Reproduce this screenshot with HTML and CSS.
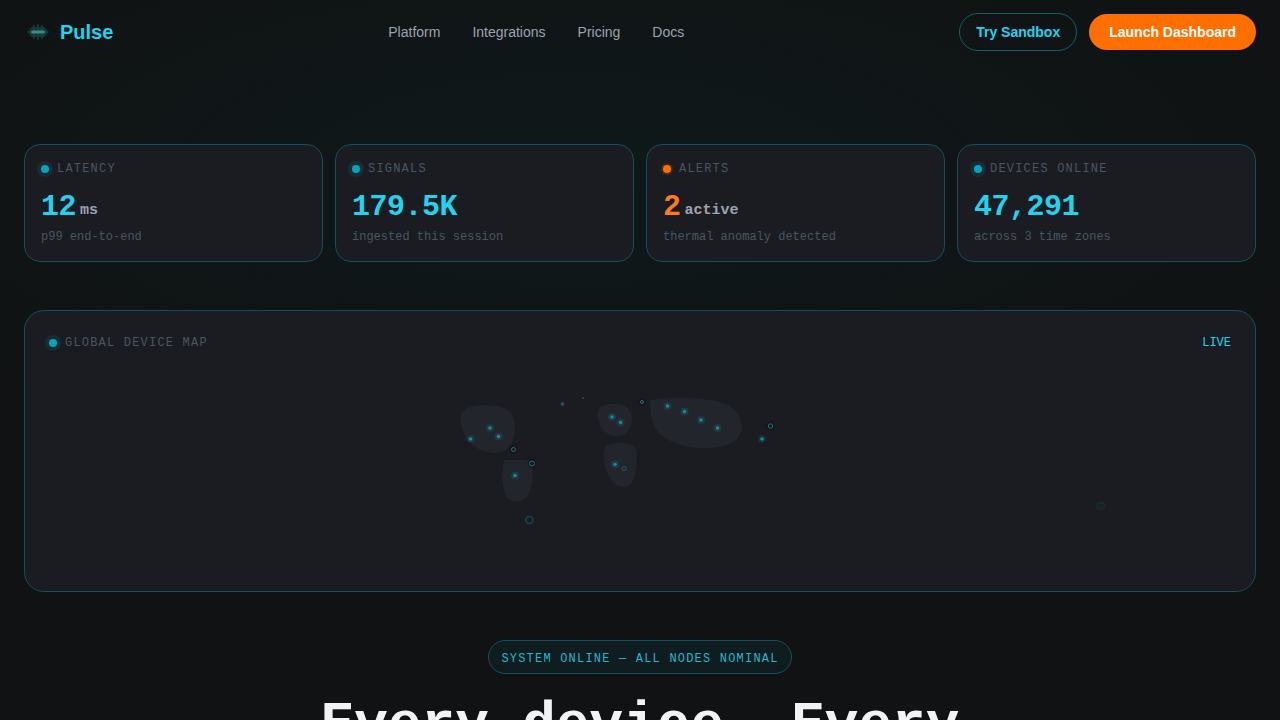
FILE: index.html
```html
<!DOCTYPE html>
<html lang="en">
<head>
    <meta charset="UTF-8">
    <meta name="viewport" content="width=device-width, initial-scale=1.0">
    <title>Pulse</title>
    <link rel="stylesheet" href="styles.css">
</head>
<body>
    <header>
        <a href="#" class="logo">
            <svg class="logo-icon" viewBox="0 0 28 28" aria-hidden="true">
                <path d="M3 14 L8 9 H20 L25 14 L20 19 H8 Z" fill="#123838"/>
                <path d="M10 7 V21 M14 6 V22 M18 7 V21" stroke="#173f3e" stroke-width="1.5"/>
                <rect x="7" y="12.5" width="14" height="3" rx="1.5" fill="#3f8a86"/>
            </svg>
            Pulse
        </a>
        <nav>
            <ul>
                <li><a href="#">Platform</a></li>
                <li><a href="#">Integrations</a></li>
                <li><a href="#">Pricing</a></li>
                <li><a href="#">Docs</a></li>
            </ul>
        </nav>
        <div class="actions">
            <a href="#" class="btn-ghost">Try Sandbox</a>
            <a href="#" class="btn-primary">Launch Dashboard</a>
        </div>
    </header>

    <main>
        <section class="stats">
            <div class="card">
                <div class="label"><span class="dot"></span>LATENCY</div>
                <div class="value">12<span class="unit">ms</span></div>
                <div class="sub">p99 end-to-end</div>
            </div>
            <div class="card">
                <div class="label"><span class="dot"></span>SIGNALS</div>
                <div class="value">179.5K</div>
                <div class="sub">ingested this session</div>
            </div>
            <div class="card">
                <div class="label"><span class="dot dot-alert"></span>ALERTS</div>
                <div class="value value-alert">2<span class="unit">active</span></div>
                <div class="sub">thermal anomaly detected</div>
            </div>
            <div class="card">
                <div class="label"><span class="dot"></span>DEVICES ONLINE</div>
                <div class="value">47,291</div>
                <div class="sub">across 3 time zones</div>
            </div>
        </section>

        <section class="map-card">
            <div class="map-head">
                <div class="label"><span class="dot"></span>GLOBAL DEVICE MAP</div>
                <span class="live">LIVE</span>
            </div>
            <!-- viewBox uses page coordinates so the pins are easy to read off -->
            <svg class="map" viewBox="49 351 1182 216" aria-hidden="true">
                <g class="land">
                    <path d="M461 415 C463 406 480 404 497 406 C510 408 515 416 515 428 C515 442 508 453 494 453 C482 452 470 446 465 436 C462 429 460 422 461 415 Z"/>
                    <path d="M504 460 H530 C534 470 533 485 528 496 C522 503 510 503 506 496 C501 486 502 470 504 460 Z"/>
                    <path d="M599 409 C603 403 622 402 628 408 C634 416 633 428 625 434 C616 439 606 435 601 427 C598 421 597 414 599 409 Z"/>
                    <path d="M605 447 C612 441 632 442 636 449 C638 460 637 475 631 484 C624 489 615 487 610 478 C604 468 602 456 605 447 Z"/>
                    <path d="M650 400 C668 397 700 397 720 402 C735 406 742 416 742 428 C741 441 728 447 708 448 C688 449 668 443 657 431 C651 423 650 410 650 400 Z"/>
                </g>
                <g class="pins">
                    <circle class="halo" cx="470.500" cy="439" r="4"/><circle cx="470.500" cy="439" r="1.800"/>
                    <circle class="halo" cx="490" cy="428" r="4"/><circle cx="490" cy="428" r="1.800"/>
                    <circle class="halo" cx="498.500" cy="436.500" r="4"/><circle cx="498.500" cy="436.500" r="1.800"/>
                    <circle class="halo" cx="515" cy="475.500" r="4"/><circle cx="515" cy="475.500" r="1.800"/>
                    <circle class="halo" cx="612" cy="417" r="4"/><circle cx="612" cy="417" r="1.800"/>
                    <circle class="halo" cx="620.500" cy="422.500" r="4"/><circle cx="620.500" cy="422.500" r="1.800"/>
                    <circle class="halo" cx="615" cy="464.500" r="4"/><circle cx="615" cy="464.500" r="1.800"/>
                    <circle class="halo" cx="667.500" cy="406" r="4"/><circle cx="667.500" cy="406" r="1.800"/>
                    <circle class="halo" cx="684.500" cy="411.500" r="4"/><circle cx="684.500" cy="411.500" r="1.800"/>
                    <circle class="halo" cx="701" cy="420" r="4"/><circle cx="701" cy="420" r="1.800"/>
                    <circle class="halo" cx="717.500" cy="428" r="4"/><circle cx="717.500" cy="428" r="1.800"/>
                    <circle class="halo" cx="762" cy="439" r="4"/><circle cx="762" cy="439" r="1.800"/>
                    <circle class="pin-dim" cx="562.500" cy="404" r="1.800"/>
                    <circle cx="583" cy="398" r="0.700"/>
                </g>
                <g class="rings">
                    <circle class="ring-back" cx="513.500" cy="449.500" r="4"/><circle cx="513.500" cy="449.500" r="2"/>
                    <circle class="ring-back" cx="532" cy="463.500" r="4.500"/><circle cx="532" cy="463.500" r="2.500"/>
                    <circle class="ring-back" cx="642" cy="402" r="3.500"/><circle cx="642" cy="402" r="1.500"/>
                    <circle class="ring-back" cx="770.500" cy="426" r="4.500"/><circle cx="770.500" cy="426" r="2.200"/>
                    <circle class="ring-dim" cx="624" cy="468.500" r="2"/>
                    <circle class="ring-faint" cx="529.500" cy="520" r="3.500"/>
                    <circle class="ring-fainter" cx="1100.500" cy="506" r="4"/>
                </g>
            </svg>
        </section>

        <section class="hero">
            <div class="badge">SYSTEM ONLINE — ALL NODES NOMINAL</div>
            <h1>Every device. Every</h1>
        </section>
    </main>
</body>
</html>
```

FILE: styles.css
```css
html, body {
    height: 720px;
    overflow: hidden;
}

body {
    font-family: "Liberation Sans", Arial, sans-serif;
    margin: 0;
    padding: 0;
    background-color: #101213;
    background-image: radial-gradient(ellipse 800px 300px at 45% 180px, #0f191a 0%, #101213 100%);
    color: #e8ecf1;
}

header {
    height: 64px;
    padding: 0 24px;
    display: flex;
    justify-content: space-between;
    align-items: center;
}

.logo {
    display: flex;
    align-items: center;
    gap: 8px;
    font-size: 20px;
    font-weight: bold;
    color: #22d3ee;
    text-decoration: none;
}

.logo-icon {
    width: 28px;
    height: 28px;
}

nav ul {
    list-style: none;
    display: flex;
    gap: 32px;
    margin: 0;
    padding: 0;
}

nav ul li a {
    color: #9ca3af;
    font-size: 14px;
    text-decoration: none;
}

.actions {
    display: flex;
    align-items: center;
    gap: 12px;
}

.btn-ghost {
    padding: 11px 16px;
    border: 1px solid #155e68;
    border-radius: 19px;
    color: #22d3ee;
    font-size: 14px;
    font-weight: bold;
    line-height: 14px;
    text-decoration: none;
}

.btn-primary {
    padding: 10px 20px;
    border-radius: 18px;
    background-color: #ff6f00;
    color: #fff;
    font-size: 14px;
    font-weight: bold;
    line-height: 16px;
    text-decoration: none;
}

main {
    padding: 80px 24px 0;
}

.stats {
    display: grid;
    grid-template-columns: repeat(4, 1fr);
    gap: 12px;
    margin-bottom: 48px;
}

.card {
    height: 118px;
    box-sizing: border-box;
    padding: 16px;
    background-color: #1a1c22;
    border: 1px solid #174e5a;
    border-radius: 16px;
}

.label {
    display: flex;
    align-items: center;
    gap: 8px;
    font-family: "Liberation Mono", monospace;
    font-size: 12px;
    line-height: 16px;
    letter-spacing: 1.2px;
    color: #4b5563;
}

.dot {
    width: 8px;
    height: 8px;
    border-radius: 50%;
    background-color: #06a5bd;
    box-shadow: 0 0 0 4px rgba(34, 211, 238, 0.09);
}

.dot-alert {
    background-color: #ff6f00;
    box-shadow: 0 0 0 2px rgba(255, 111, 0, 0.18);
}

.value {
    margin-top: 12px;
    font-family: "Liberation Mono", monospace;
    font-size: 30px;
    font-weight: bold;
    line-height: 36px;
    letter-spacing: -0.5px;
    color: #22d3ee;
}

.value-alert {
    color: #ff7a1a;
}

.unit {
    margin-left: 4px;
    font-size: 15px;
    line-height: 1;
    letter-spacing: 0;
    vertical-align: 1px;
    color: #9ca3af;
}

.sub {
    margin-top: 5px;
    font-family: "Liberation Mono", monospace;
    font-size: 12px;
    line-height: 14px;
    color: #4b5563;
}

.map-card {
    height: 282px;
    box-sizing: border-box;
    padding: 24px;
    background-color: #1a1c22;
    border: 1px solid #174e5a;
    border-radius: 20px;
    margin-bottom: 48px;
}

.map-head {
    display: flex;
    justify-content: space-between;
    align-items: center;
}

.live {
    font-family: "Liberation Mono", monospace;
    font-size: 12px;
    line-height: 16px;
    color: #22d3ee;
}

.map {
    display: block;
    width: 100%;
    height: 216px;
}

.land path {
    fill: #23252d;
}

.pins circle {
    fill: #128c9e;
}

.pins .halo {
    fill: rgba(34, 211, 238, 0.1);
}

.pins .pin-dim {
    fill: #135f6c;
}

.rings circle {
    fill: none;
    stroke: #1a7886;
    stroke-width: 1;
}

.rings .ring-back {
    fill: rgba(13, 15, 17, 0.5);
    stroke: none;
}

.rings .ring-dim {
    stroke: #1d5a63;
}

.rings .ring-faint {
    stroke: #134044;
    stroke-width: 2;
}

.rings .ring-fainter {
    stroke: #16302c;
    fill: rgba(22, 70, 60, 0.2);
}

.hero {
    display: flex;
    flex-direction: column;
    align-items: center;
}

.badge {
    padding: 11px 12px 7px;
    font-family: "Liberation Mono", monospace;
    font-size: 12px;
    line-height: 14px;
    letter-spacing: 1.2px;
    color: #22b8cf;
    background-color: #0f1c20;
    border: 1px solid #174e5a;
    border-radius: 17px;
}

h1 {
    margin: 20px 0 0;
    font-family: "Liberation Mono", monospace;
    font-size: 56px;
    font-weight: bold;
    line-height: 62px;
    color: #f1f3f5;
    white-space: nowrap;
}
```
